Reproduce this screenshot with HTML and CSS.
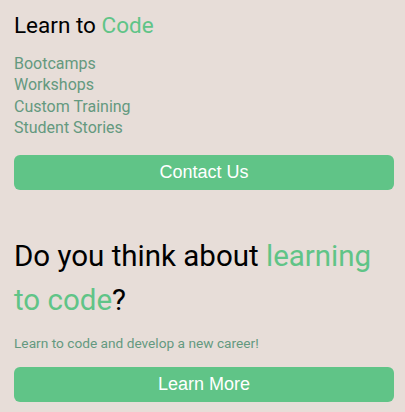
FILE: index.html
```html
<!DOCTYPE html>
<html lang="en">
<head>
<meta charset="utf-8">
<title>Learn to Code</title>
<link rel="stylesheet" href="styles.css">
</head>
<body>
  <header class="nav">
    <h1 class="brand">Learn to <span class="accent">Code</span></h1>
    <ul class="links">
      <li><a href="#">Bootcamps</a></li>
      <li><a href="#">Workshops</a></li>
      <li><a href="#">Custom Training</a></li>
      <li><a href="#">Student Stories</a></li>
    </ul>
    <button class="btn">Contact Us</button>
  </header>
  <main class="hero">
    <h2 class="hero-title">Do you think about <span class="accent">learning to code</span>?</h2>
    <p class="hero-text">Learn to code and develop a new career!</p>
    <button class="btn">Learn More</button>
  </main>
</body>
</html>
```

FILE: styles.css
```css
html, body {
  margin: 0;
  padding: 0;
}
body {
  background: #e7ddd8;
  font-family: Roboto, "Noto Sans", sans-serif;
  padding: 0 11px 0 14px;
  color: #000;
}
.accent {
  color: #60c487;
}
.nav {
  display: flex;
  flex-direction: column;
  padding-top: 12px;
}
.brand {
  margin: 0;
  font-size: 22.5px;
  font-weight: 400;
  line-height: normal;
}
.links {
  list-style: none;
  margin: 14.5px 0 0;
  padding: 0;
}
.links li {
  font-size: 16px;
  line-height: 21.5px;
}
.links a {
  color: #64997f;
  text-decoration: none;
}
.btn {
  display: block;
  width: 100%;
  height: 35px;
  margin: 0;
  border: none;
  border-radius: 6px;
  background: #60c487;
  color: #fff;
  font-family: "Liberation Sans", Arial, sans-serif;
  font-size: 18px;
  padding: 0;
}
.nav .btn {
  margin-top: 16.5px;
}
.hero {
  padding-top: 44px;
}
.hero-title {
  margin: 0;
  font-size: 29.5px;
  font-weight: 400;
  line-height: 44px;
}
.hero-text {
  margin: 13px 0 16px;
  font-size: 13.7px;
  color: #64997f;
}
```
